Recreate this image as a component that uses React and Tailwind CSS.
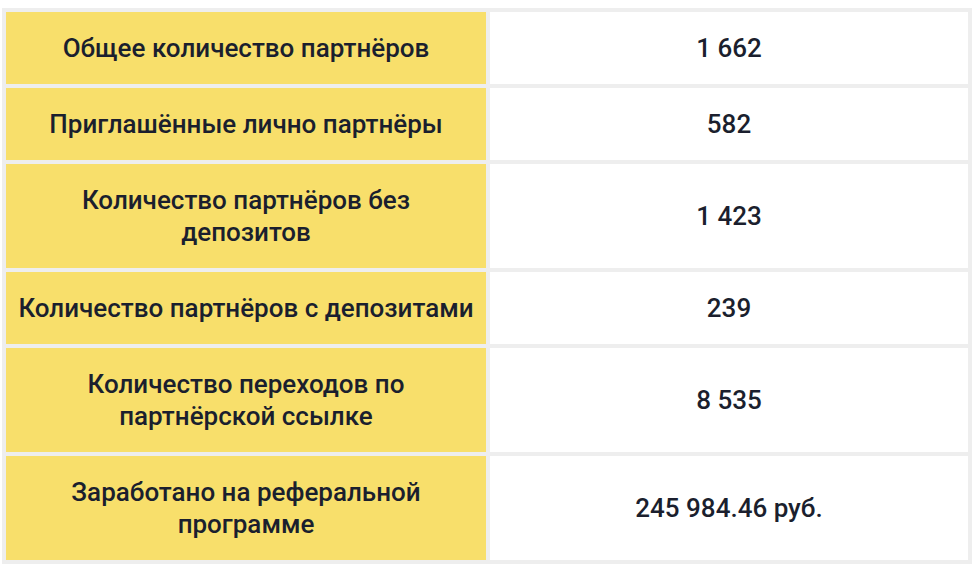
import React from "react";

const rows = [
  ["Общее количество партнёров", "1 662", "h-[72px]"],
  ["Приглашённые лично партнёры", "582", "h-[72px]"],
  ["Количество партнёров без депозитов", "1 423", "h-[104px]"],
  ["Количество партнёров с депозитами", "239", "h-[72px]"],
  ["Количество переходов по партнёрской ссылке", "8 535", "h-[104px]"],
  ["Заработано на реферальной программе", "245 984.46 руб.", "h-[104px]"],
];

export default function App() {
  return (
    <div className="w-[980px] h-[564px] bg-white pt-2 pl-[2px]" style={{ fontFamily: "Roboto, 'Noto Sans', sans-serif" }}>
      <div className="w-[970px] bg-[#eeeeee] p-1 grid grid-cols-[480px_478px] gap-1">
        {rows.map(([label, value, h], i) => (
          <React.Fragment key={i}>
            <div className={`${h} bg-[#f8df6b] flex items-center justify-center text-center px-[10px] text-[26px] leading-[32px] font-medium text-[#1b1f2e]`}>
              <span>{label}</span>
            </div>
            <div className={`${h} bg-white flex items-center justify-center text-center text-[26px] leading-[32px] font-medium text-[#1b1f2e]`}>
              {value}
            </div>
          </React.Fragment>
        ))}
      </div>
    </div>
  );
}
